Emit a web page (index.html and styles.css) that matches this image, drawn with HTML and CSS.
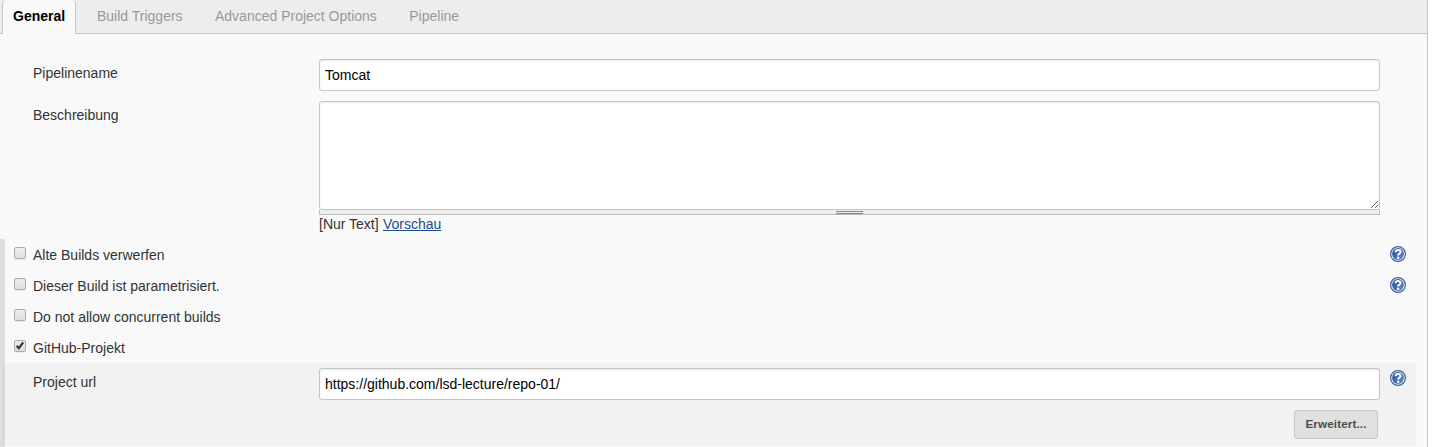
FILE: index.html
```html
<!DOCTYPE html>
<html lang="de">
<head>
<meta charset="utf-8">
<title>Tomcat Config</title>
<link rel="stylesheet" href="styles.css">
</head>
<body>
<svg class="defs" width="0" height="0" aria-hidden="true">
  <defs>
    <linearGradient id="help-fill" x1="0" y1="0" x2="1" y2="1">
      <stop offset="0" stop-color="#1d4a8c"/>
      <stop offset="1" stop-color="#6a92cb"/>
    </linearGradient>
    <symbol id="help" viewBox="0 0 16 16">
      <circle cx="8" cy="8" r="7.4" fill="#eef3fa" stroke="#3c659f" stroke-width="1.2"/>
      <circle cx="8" cy="8" r="5.9" fill="url(#help-fill)"/>
      <path d="M5.5 6.2C5.5 3.2 10.5 3.2 10.5 5.9C10.5 7.7 8.1 7.6 8.1 9.6" fill="none" stroke="#fff" stroke-width="2"/>
      <rect x="7" y="10.7" width="2.2" height="2.1" fill="#fff"/>
    </symbol>
  </defs>
</svg>
<main class="panel">
  <nav class="tabs">
    <a class="tab active">General</a>
    <a class="tab">Build Triggers</a>
    <a class="tab">Advanced Project Options</a>
    <a class="tab">Pipeline</a>
  </nav>
  <form class="config">
    <div class="row name-row">
      <label class="label">Pipelinename</label>
      <input class="text" type="text" value="Tomcat">
    </div>
    <div class="row description-row">
      <label class="label">Beschreibung</label>
      <div class="description">
        <textarea class="area"></textarea>
        <div class="handle"><span class="grip"></span></div>
        <div class="preview">[Nur Text] <a class="link">Vorschau</a></div>
      </div>
    </div>
    <section class="options">
      <div class="option"><span class="check"></span><span class="caption">Alte Builds verwerfen</span><svg class="help"><use href="#help"/></svg></div>
      <div class="option"><span class="check"></span><span class="caption">Dieser Build ist parametrisiert.</span><svg class="help"><use href="#help"/></svg></div>
      <div class="option"><span class="check"></span><span class="caption">Do not allow concurrent builds</span></div>
      <div class="option"><span class="check"><svg class="tick" viewBox="0 0 12 12"><path d="M2.6 5.8L4.8 8.2L9.2 2.4" fill="none" stroke="#3b3b3b" stroke-width="2.3"/></svg></span><span class="caption">GitHub-Projekt</span></div>
      <div class="nested">
        <div class="row url-row">
          <label class="label">Project url</label>
          <input class="text" type="text" value="https://github.com/lsd-lecture/repo-01/">
          <svg class="help"><use href="#help"/></svg>
        </div>
        <div class="actions"><button class="button" type="button">Erweitert...</button></div>
      </div>
    </section>
  </form>
</main>
</body>
</html>
```
FILE: styles.css
```css
* { box-sizing: border-box; }
body {
  margin: 0;
  overflow: hidden;
  background: #fff;
  color: #333;
  font: 14px/18px "Liberation Sans", Arial, sans-serif;
}
.defs { display: block; }
.panel {
  width: 1428px;
  height: 447px;
  overflow: hidden;
  background: #f9f9f9;
  border-right: 1px solid #c6c6c6;
}
.tabs {
  display: flex;
  height: 34px;
  padding-left: 2px;
  background: #ededed;
  border-bottom: 1px solid #c6c6c6;
}
.tab {
  height: 34px;
  padding: 7px 11px 0 10px;
  margin-right: 11.4px;
  color: #999;
}
.tab.active {
  width: 74px;
  margin-right: 11px;
  color: #000;
  font-weight: bold;
  background: #f9f9f9;
  border: 1px solid #c6c6c6;
  border-width: 0 1px;
  border-radius: 4px 4px 0 0;
}
.row { display: flex; align-items: flex-start; }
.name-row { padding: 25px 0 10px 33px; }
.description-row { height: 138px; padding-left: 33px; }
.label { width: 286px; flex: none; padding-top: 5px; }
.text {
  width: 1061px;
  height: 32px;
  padding: 0 5px;
  color: #000;
  font: inherit;
  background: #fff;
  border: 1px solid #c6c6c6;
  border-radius: 3px;
  box-shadow: inset 0 1px 2px rgba(0, 0, 0, .1);
  outline: none;
}
.description { width: 1061px; }
.area {
  display: block;
  width: 100%;
  height: 109px;
  padding: 5px;
  background: #fff;
  border: 1px solid #c6c6c6;
  border-radius: 3px;
  box-shadow: inset 0 1px 2px rgba(0, 0, 0, .1);
  resize: vertical;
  font: inherit;
}
.handle {
  display: flex;
  justify-content: center;
  height: 5px;
  background: #eee;
  border: 1px solid #bbb;
  border-top: 0;
}
.grip {
  width: 27px;
  height: 3px;
  margin-top: 1px;
  border: 1px solid #888;
  border-width: 1px 0;
}
.preview { height: 18px; }
.link { margin-left: .4px; color: #1c4c94; text-decoration: underline; }
.options {
  width: 1416px;
  height: 208px;
  border-left: 5px solid #dfdfdf;
}
.option { display: flex; height: 31px; padding-left: 9px; }
.check {
  width: 12px;
  height: 12px;
  margin: 8px 7px 0 0;
  background: linear-gradient(#ededed, #dedede);
  border: 1px solid #acacac;
  border-radius: 2px;
  box-shadow: 0 1px 0 rgba(0, 0, 0, .06);
}
.tick { display: block; width: 12px; height: 12px; margin: -1px; }
.caption { padding-top: 7px; }
.help { width: 16px; height: 16px; flex: none; }
.option .help { margin: 7px 10px 0 auto; }
.nested {
  height: 83px;
  margin-left: -3px;
  background: #f2f2f2;
  border-left: 3px solid #d9d9d9;
}
.url-row { padding: 5px 0 0 28px; }
.url-row .help { margin: 2px 0 0 10px; }
.actions { display: flex; justify-content: flex-end; padding: 10px 38px 0 0; }
.button {
  width: 84px;
  height: 29px;
  padding: 0 0 3px;
  color: #4d4d4d;
  font: bold 11.7px "Liberation Sans", Arial, sans-serif;
  letter-spacing: .12px;
  background: #e0e0e0;
  border: 1px solid #c6c6c6;
  border-radius: 3px;
}
```
